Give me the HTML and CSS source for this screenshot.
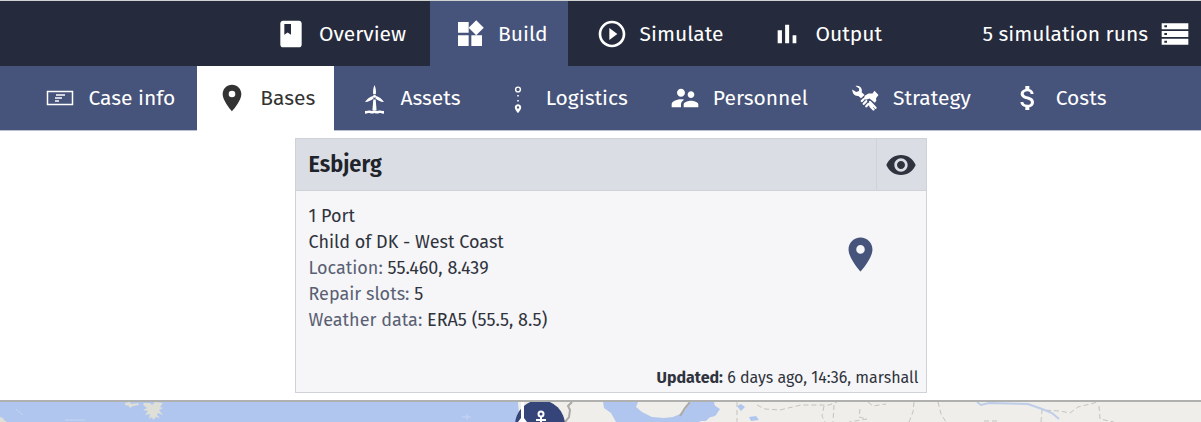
FILE: index.html
```html
<!DOCTYPE html>
<html lang="en">
<head>
    <meta charset="UTF-8">
    <meta name="viewport" content="width=device-width, initial-scale=1">
    <title>Bases</title>
    <link rel="stylesheet" href="styles.css">
</head>
<body>
<header class="topbar">
    <nav class="tabs main-tabs" aria-label="Main">
        <a class="tab" href="#overview">
            <svg class="icon" viewBox="0 0 24 24"><path d="M18 2H6c-1.100 0-2 .9-2 2v16c0 1.100.9 2 2 2h12c1.100 0 2-.9 2-2V4c0-1.100-.9-2-2-2zM7 4.500h5v8l-2.500-1.700L7 12.500v-8z"/></svg>
            <span>Overview</span>
        </a>
        <a class="tab active" href="#build" aria-current="page">
            <svg class="icon" viewBox="0 0 24 24"><path d="M13 13v8h8v-8h-8zM3 21h8v-8H3v8zM3 3v8h8V3H3zm13.660-1.310L11 7.340 16.660 13l5.660-5.660-5.660-5.650z"/></svg>
            <span>Build</span>
        </a>
        <a class="tab" href="#simulate">
            <svg class="icon" viewBox="0 0 24 24"><path d="M10 16.500l6-4.500-6-4.500v9zM12 2C6.480 2 2 6.480 2 12s4.480 10 10 10 10-4.480 10-10S17.520 2 12 2zm0 18c-4.410 0-8-3.590-8-8s3.590-8 8-8 8 3.590 8 8-3.590 8-8 8z"/></svg>
            <span>Simulate</span>
        </a>
        <a class="tab" href="#output">
            <svg class="icon" viewBox="0 0 24 24"><path d="M5 9.200h3.200V19H5zM10.600 5h3v14h-3zM16.200 13H19v6h-2.800z"/></svg>
            <span>Output</span>
        </a>
    </nav>
    <a class="runs" href="#runs">
        <span>5 simulation runs</span>
        <svg class="icon" viewBox="0 0 24 24"><path d="M2 20h20v-4.500H2V20zm2-3h2v1.500H4V17zM2 4v4.500h20V4H2zm4 3H4V5.500h2V7zm-4 7.200h20V9.800H2v4.400zm2-3h2v1.500H4v-1.500z"/></svg>
    </a>
</header>

<nav class="tabs sub-tabs" aria-label="Build">
    <a class="tab" href="#case">
        <svg class="icon" viewBox="0 0 32 32"><path fill="none" stroke="currentColor" stroke-width="1.500" d="M3.500 9.500h25v13h-25zM12 13h9M11 16h7M11 19h4"/></svg>
        <span>Case info</span>
    </a>
    <a class="tab active" href="#bases" aria-current="page">
        <svg class="icon" viewBox="0 0 24 24"><path d="M12 2C8.130 2 5 5.130 5 9c0 5.250 7 13 7 13s7-7.750 7-13c0-3.870-3.130-7-7-7zm0 9.500a2.500 2.500 0 010-5 2.500 2.500 0 010 5z"/></svg>
        <span>Bases</span>
    </a>
    <a class="tab" href="#assets">
        <svg class="icon" viewBox="0 0 32 32">
            <path d="M18.500 3c-1.300 3-1.700 6-1.300 9.200h2.600C20.300 9 19.800 6 18.500 3zM16.700 14l1 2.200c-2.200 2.200-5 3.500-8.700 3.800 2-2.900 4.500-4.900 7.700-6zM20.300 14l-1 2.200c2.200 2.200 5 3.500 8.700 3.800-2-2.900-4.500-4.900-7.700-6z"/>
            <circle cx="18.500" cy="14.200" r="1.500"/>
            <path d="M17.300 17.500h2.400l.9 11h-4.200z"/>
            <path d="M9 31.500c1.500.8 3-.9 5-.3 2 .5 3 .5 4.500-.2 1.500.7 2.700.7 4.500.2 2-.6 3 1 5 .3v-2.700c-2 .6-3-.6-5-.2-1.600.5-3 .4-4.500-.3-1.500.7-3 .8-4.500.3-2-.4-3 .8-5 .2z"/>
        </svg>
        <span>Assets</span>
    </a>
    <a class="tab" href="#logistics">
        <svg class="icon" viewBox="0 0 32 32">
            <circle cx="16" cy="7.500" r="2.400" fill="none" stroke="currentColor" stroke-width="1.400"/>
            <path d="M15.200 13h1.600v1.600h-1.600zM15.200 18h1.600v1.600h-1.600z"/>
            <path d="M16 22.300c-1.800 0-3.200 1.300-3.200 3.100 0 2.100 3.200 5.600 3.200 5.600s3.200-3.500 3.200-5.600c0-1.800-1.400-3.100-3.200-3.100zm0 4.300a1.200 1.200 0 010-2.400 1.200 1.200 0 010 2.400z"/>
        </svg>
        <span>Logistics</span>
    </a>
    <a class="tab" href="#personnel">
        <svg class="icon" viewBox="0 0 24 24"><path d="M16.500 12c1.380 0 2.490-1.120 2.490-2.500S17.880 7 16.500 7 14 8.120 14 9.500s1.120 2.500 2.500 2.500zM9 11c1.660 0 2.990-1.340 2.990-3S10.660 5 9 5 6 6.340 6 8s1.340 3 3 3zm7.500 3c-1.830 0-5.500.92-5.500 2.750V19h11v-2.250c0-1.830-3.670-2.750-5.500-2.750zM9 13c-2.330 0-7 1.170-7 3.750V19h7v-2.250c0-.85.330-2.340 2.370-3.470C10.500 13.100 9.660 13 9 13z"/></svg>
        <span>Personnel</span>
    </a>
    <a class="tab" href="#strategy">
        <svg class="icon" viewBox="0 0 32 32">
            <path d="M3.200 7.500l4 2.600 2.800-1 .2-2.600L6.500 4c3-.6 5.800.9 6.300 3.800.2 1 .1 1.700-.2 2.500l3 2.700-3.600 3.300-2.600-2.400c-3.200.6-6.200-2.200-6.200-6.400z"/>
            <path d="M16 13.500l3.500-2h4l2-2.700 4 4.200-2.500 3.200.3 2.600-1.500 2-5.300-4.300-3.500 1.200-2.300-1.200z"/>
            <path fill="none" stroke="currentColor" stroke-width="2.300" stroke-linecap="round" d="M12.800 19l1.800-1.800M14.800 21.800l2.400-2.600M17.300 24.300l2-2.300M21 20l5.500 5.800M21.500 24.500l3 3M20 22l3 3"/>
        </svg>
        <span>Strategy</span>
    </a>
    <a class="tab" href="#costs">
        <svg class="icon" viewBox="0 0 24 24"><path d="M11.800 10.900c-2.270-.59-3-1.200-3-2.150 0-1.090 1.010-1.850 2.700-1.850 1.780 0 2.440.85 2.500 2.100h2.210c-.07-1.720-1.120-3.300-3.210-3.810V3h-3v2.160c-1.940.42-3.500 1.680-3.500 3.610 0 2.310 1.910 3.460 4.700 4.130 2.500.6 3 1.480 3 2.410 0 .69-.49 1.790-2.700 1.790-2.060 0-2.870-.92-2.980-2.100h-2.200c.12 2.190 1.760 3.420 3.680 3.830V21h3v-2.150c1.950-.37 3.500-1.500 3.500-3.550 0-2.840-2.430-3.810-4.700-4.400z"/></svg>
        <span>Costs</span>
    </a>
</nav>

<main class="content">
    <article class="card">
        <header class="card-header">
            <h2 class="card-title">Esbjerg</h2>
            <button class="view-button" type="button" aria-label="View base">
                <svg class="icon" viewBox="0 0 24 24"><path d="M12 4.500C7 4.500 2.730 7.610 1 12c1.730 4.390 6 7.500 11 7.500s9.270-3.110 11-7.500c-1.730-4.390-6-7.500-11-7.500zM12 17c-2.760 0-5-2.240-5-5s2.240-5 5-5 5 2.240 5 5-2.240 5-5 5zm0-8c-1.660 0-3 1.340-3 3s1.340 3 3 3 3-1.340 3-3-1.340-3-3-3z"/></svg>
            </button>
        </header>
        <div class="card-body">
            <div class="details">
                <p>1 Port</p>
                <p>Child of DK - West Coast</p>
                <p><span class="key">Location:</span> 55.460, 8.439</p>
                <p><span class="key">Repair slots:</span> 5</p>
                <p><span class="key">Weather data:</span> ERA5 (55.5, 8.5)</p>
            </div>
            <svg class="pin" viewBox="0 0 24 24"><path d="M12 2C8.130 2 5 5.130 5 9c0 5.250 7 13 7 13s7-7.750 7-13c0-3.870-3.130-7-7-7zm0 9.500a2.500 2.500 0 010-5 2.500 2.500 0 010 5z"/></svg>
        </div>
        <footer class="card-footer"><b>Updated:</b> 6 days ago, 14:36, marshall</footer>
    </article>
</main>

<section class="map" aria-label="Map">
    <svg class="map-canvas" viewBox="0 0 1201 20" preserveAspectRatio="xMidYMin slice">
        <path fill="#b1c6ee" d="M0 0h1201v20H0z"/>
        <!-- land -->
        <path fill="#efeeea" d="M518 0h85l1 6 7 5 5 9H516l3-8zM638 0h53l-6 8-5 4-7 3-9 1-12-1-10-5-6-5 2-5zM714 0h487v20H699l8-4 8-2 5-7-5-3z"/>
        <path fill="#dedfd6" d="M125 1l5-1 1 2 7-1 1 2-6 1-3 2-1-2-4-1zM144 1h6l2 2 3-3 8 1-3 4 3 1-4 2 4 5-5-2-1 2 3 3-4-1-3 3-1-3-3 2 1-5-5 1 3-4-5-1 4-2-4-3zM0 15l3 1 1 2 3 2H0z"/>
        <path fill="#b1c6ee" d="M686 6l6-5 14-1 8 3 5 4-3 6-6 2-4 4h-9l-2-6-4-3zM737 4l4-2 4 3-4 4zM749 15l7-1 3 4-8 1z"/>
        <path fill="none" stroke="#c6d6f3" stroke-width="1" d="M65 18h20M462 15h9M467 12v6M16 7l7 6"/>
        <!-- shore and borders -->
        <path fill="none" stroke="#aaa9a5" stroke-width="2" d="M572 0l-4 4 2 4-1 7-4 5M690 0l-5 6-5 8"/>
        <path fill="none" stroke="#c4c3bd" stroke-width="1" stroke-dasharray="5 3" d="M737 0v20M757 3l8 4 15 1 21-5 28 0 8-3M824 4l-2 10 3 6M834 3l-1 17M860 7l-1 8 8 2-18 3M868 0l5 4 13-2M914 0l-1 10-4 10M938 0l3 12 5 8M1041 20l1-12 18 1 10 2 8-6 16-4 7-3M1099 4l1 13 14 3M984 19h16"/>
        <path fill="none" stroke="#bdcdea" stroke-width="2" d="M977 0l4 3 8-2 39 1 14 5 10 4 7 6"/>
        <!-- port marker -->
        <circle cx="540" cy="23" r="25" fill="#35457a"/>
        <path fill="#fff" d="M521 0h3v16l3 4h-9l3-4z"/>
        <g fill="none" stroke="#fff" stroke-width="2"><circle cx="541" cy="12" r="2.500"/><path d="M541 14v6M536 18h10"/></g>
    </svg>
</section>
</body>
</html>
```
FILE: styles.css
```css
* {
    box-sizing: border-box;
    margin: 0;
    padding: 0;
}

body {
    min-height: 100vh;
    display: flex;
    flex-direction: column;
    background: #fff;
    border-top: 1px solid #cfd2d1;
    color: #2f333d;
    font-family: "Fira Sans", "Noto Sans", sans-serif;
    font-size: 18px;
    line-height: 26px;
}

a {
    color: inherit;
    text-decoration: none;
}

svg {
    display: block;
    fill: currentColor;
}

.icon {
    width: 32px;
    height: 32px;
    flex: none;
}

/* navigation */
.topbar {
    display: grid;
    grid-template-columns: 1fr auto 1fr;
    padding: 0 10px;
    background: #252b3d;
    color: #fff;
}

.tabs {
    display: flex;
    font-size: 21px;
    white-space: nowrap;
}

.tab {
    display: flex;
    align-items: center;
    gap: 12px;
    height: 65px;
    padding: 0 19px;
}

.main-tabs {
    grid-column: 2;
    gap: 4px;
    margin-right: 48px;
}

.main-tabs .tab {
    padding: 0 20px 0 24px;
}

.main-tabs .active {
    background: #46537a;
}

.runs {
    display: flex;
    align-items: center;
    justify-content: flex-end;
    gap: 11px;
    font-size: 21px;
    white-space: nowrap;
}

.sub-tabs {
    justify-content: center;
    gap: 3px;
    padding-right: 50px;
    background: #46537a;
    border-bottom: 1px solid #b9c0d2;
    color: #fff;
}

.sub-tabs .tab {
    height: 64px;
}

.sub-tabs .active {
    height: 65px;
    margin-bottom: -1px;
    padding-bottom: 1px;
    background: #fff;
    color: #333;
}

/* base card */
.content {
    padding: 7px 0 7px 20px;
}

.card {
    width: 632px;
    max-width: 100%;
    margin: 0 auto;
    background: #f6f6f8;
    border: 1px solid #cfd2d9;
}

.card-header {
    display: flex;
    height: 52px;
    background: #dadde4;
    border-bottom: 1px solid #cfd2d9;
}

.card-title {
    flex: 1;
    padding-left: 13px;
    color: #20232a;
    font-family: "Fira Sans Condensed", "Fira Sans", "Noto Sans", sans-serif;
    font-size: 24px;
    font-weight: 600;
    line-height: 50px;
}

.view-button {
    width: 50px;
    display: flex;
    align-items: center;
    justify-content: center;
    background: none;
    border: 0;
    border-left: 1px solid #cfd2d9;
    color: #2f333d;
    cursor: pointer;
}

.card-body {
    display: flex;
    justify-content: space-between;
    padding: 12px 45px 0 13px;
}

.key {
    color: #596073;
}

.pin {
    width: 41px;
    height: 41px;
    margin-top: 31px;
    color: #46537a;
}

.card-footer {
    padding: 32px 7px 1px;
    text-align: right;
    font-size: 16px;
}

/* map */
.map {
    flex: 1;
    min-height: 20px;
    border-top: 2px solid #b0b0ae;
    background: #b1c6ee;
    overflow: hidden;
}

.map-canvas {
    width: 100%;
}
```
